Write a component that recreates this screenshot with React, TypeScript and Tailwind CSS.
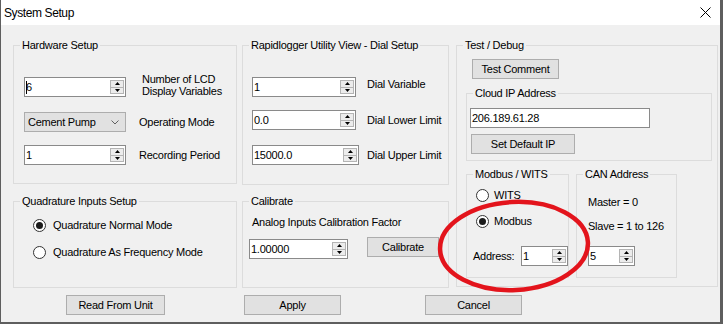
import type { ReactNode } from 'react';

/**
 * System Setup dialog - WinForms look
 */

function GroupBox({ title, className, children }: { title: string; className: string; children: ReactNode }) {
  return (
    <fieldset className={`min-w-0 border border-[#dcdcdc] ${className}`}>
      <legend className="ml-[6px] px-[2px] leading-[12px]">{title}</legend>
      {children}
    </fieldset>
  );
}

function Arrow({ up }: { up?: boolean }) {
  return (
    <svg width="5" height="3" viewBox="0 0 5 3">
      <path d={up ? 'M0 3 L2.5 0 L5 3 Z' : 'M0 0 L2.5 3 L5 0 Z'} fill="#000" />
    </svg>
  );
}

function Spin({ value, className, caret }: { value: string; className: string; caret?: boolean }) {
  return (
    <div className={`flex h-[20px] items-center border border-[#8a8a8a] bg-white ${className}`}>
      <span className="relative flex-1 pl-[1px] leading-[12px]">
        {caret && <span className="absolute left-[1px] top-0 h-[13px] w-px bg-black" />}
        {value}
      </span>
      <div className="mr-px flex h-[14px] w-[14px] flex-col">
        <div className="flex flex-1 items-center justify-center border border-[#b4b4b4] bg-[#ececec]">
          <Arrow up />
        </div>
        <div className="flex flex-1 items-center justify-center border border-t-0 border-[#b4b4b4] bg-[#ececec]">
          <Arrow />
        </div>
      </div>
    </div>
  );
}

function Btn({ children, className }: { children: ReactNode; className: string }) {
  return (
    <div className={`flex h-[20px] items-center justify-center border border-[#adadad] bg-[#e1e1e1] ${className}`}>
      {children}
    </div>
  );
}

function Radio({ label, checked, className, gap }: { label: string; checked?: boolean; className: string; gap: string }) {
  return (
    <div className={`flex h-[14px] items-center ${className}`}>
      <span className="flex h-[13px] w-[13px] items-center justify-center rounded-full border border-[#333] bg-white">
        {checked && <span className="h-[7px] w-[7px] rounded-full bg-[#1b1b1b]" />}
      </span>
      <span className={gap}>{label}</span>
    </div>
  );
}

export default function App() {
  return (
    <div className="relative flex h-[324px] w-[723px] flex-col border-b-2 border-l border-r-[3px] border-[#5e5e5e] font-['Liberation_Sans',Arial,sans-serif] text-[11px] tracking-[-0.25px] text-black">
      {/* Title bar */}
      <div className="flex h-[25px] shrink-0 items-center justify-between bg-white pl-[3px] pr-[9px]">
        <span className="text-[12px] tracking-[-0.4px]">System Setup</span>
        <svg width="11" height="11" viewBox="0 0 11 11">
          <path d="M0.5 0.5 L10.5 10.5 M10.5 0.5 L0.5 10.5" stroke="#000" strokeWidth="1" />
        </svg>
      </div>

      {/* Body */}
      <div className="flex-1 bg-[#f0f0f0] pl-[12px] pt-[14px]">
        <div className="flex items-start">
          {/* Left column */}
          <div className="flex w-[224px] flex-col">
            <GroupBox title="Hardware Setup" className="h-[145px]">
              <div className="pl-[10px]">
                <div className="mt-[26px] flex items-start">
                  <Spin value="6" caret className="w-[102px]" />
                  <div className="ml-[16px] -mt-[4px] leading-[12px]">
                    Number of LCD
                    <br />
                    Display Variables
                  </div>
                </div>
                <div className="mt-[15px] flex items-center">
                  <div className="flex h-[20px] w-[102px] items-center justify-between border border-[#adadad] bg-[#e1e1e1] pl-[3px] pr-[6px]">
                    <span>Cement Pump</span>
                    <svg width="8" height="5" viewBox="0 0 8 5">
                      <path d="M0.5 0.5 L4 4 L7.5 0.5" fill="none" stroke="#606060" strokeWidth="1" />
                    </svg>
                  </div>
                  <span className="ml-[13px]">Operating Mode</span>
                </div>
                <div className="mt-[13px] flex items-center">
                  <Spin value="1" className="w-[102px]" />
                  <span className="ml-[13px]">Recording Period</span>
                </div>
              </div>
            </GroupBox>

            <GroupBox title="Quadrature Inputs Setup" className="mt-[11px] h-[93px]">
              <div className="pl-[19px]">
                <Radio label="Quadrature Normal Mode" checked className="mt-[11px]" gap="ml-[7px]" />
                <Radio label="Quadrature As Frequency Mode" className="mt-[13px]" gap="ml-[7px]" />
              </div>
            </GroupBox>
          </div>

          {/* Middle column */}
          <div className="ml-[5px] flex w-[207px] flex-col">
            <GroupBox title="Rapidlogger Utility View - Dial Setup" className="h-[146px]">
              <div className="pl-[9px]">
                <div className="mt-[26px] flex items-start">
                  <Spin value="1" className="w-[104px]" />
                  <span className="ml-[11px] mt-px leading-[12px]">Dial Variable</span>
                </div>
                <div className="mt-[13px] flex items-center">
                  <Spin value="0.0" className="w-[104px]" />
                  <span className="ml-[11px]">Dial Lower Limit</span>
                </div>
                <div className="mt-[15px] flex items-center">
                  <Spin value="15000.0" className="w-[107px]" />
                  <span className="ml-[8px]">Dial Upper Limit</span>
                </div>
              </div>
            </GroupBox>

            <GroupBox title="Calibrate" className="mt-[10px] h-[93px]">
              <div className="pl-[9px] mt-[9px] leading-[12px]">Analog Inputs Calibration Factor</div>
              <div className="mt-[9px] flex items-start pl-[6px]">
                <Spin value="1.00000" className="mt-[2px] w-[99px]" />
                <Btn className="ml-[19px] w-[72px]">Calibrate</Btn>
              </div>
            </GroupBox>
          </div>

          {/* Right column */}
          <div className="ml-[7px] w-[262px]">
            <GroupBox title="Test / Debug" className="h-[248px]">
              <Btn className="ml-[15px] mt-[8px] w-[87px]">Test Comment</Btn>

              <GroupBox title="Cloud IP Address" className="ml-[9px] mt-[8px] h-[74px] w-[246px]">
                <div className="ml-[3px] mt-[9px] flex h-[20px] w-[180px] items-center border border-[#8a8a8a] bg-white pl-[1px]">
                  206.189.61.28
                </div>
                <Btn className="ml-[4px] mt-[6px] w-[104px]">Set Default IP</Btn>
              </GroupBox>

              <div className="mt-[7px] flex">
                <GroupBox title="Modbus / WITS" className="ml-[9px] h-[110px] w-[103px]">
                  <div className="pl-[9px]">
                    <Radio label="WITS" className="mt-[8px]" gap="ml-[5px]" />
                    <Radio label="Modbus" checked className="mt-[12px]" gap="ml-[5px]" />
                  </div>
                  <div className="mt-[18px] flex items-center">
                    <span className="w-[54px] pl-[6px]">Address:</span>
                    <Spin value="1" className="w-[47px]" />
                  </div>
                </GroupBox>

                <GroupBox title="CAN Address" className="ml-[7px] h-[110px] w-[101px]">
                  <div className="pl-[11px]">
                    <div className="mt-[16px] leading-[12px]">Master = 0</div>
                    <div className="mt-[12px] leading-[12px]">Slave = 1 to 126</div>
                    <Spin value="5" className="mt-[14px] w-[47px]" />
                  </div>
                </GroupBox>
              </div>
            </GroupBox>
          </div>
        </div>

        {/* Bottom buttons */}
        <div className="mt-[7px] flex">
          <Btn className="ml-[53px] w-[99px]">Read From Unit</Btn>
          <Btn className="ml-[79px] w-[97px]">Apply</Btn>
          <Btn className="ml-[84px] w-[97px]">Cancel</Btn>
        </div>
      </div>

      {/* Red marker drawn over the dialog */}
      <svg className="pointer-events-none absolute left-0 top-0" width="723" height="324" viewBox="0 0 723 324">
        <ellipse cx="513" cy="246" rx="74" ry="44" fill="none" stroke="#e3141c" strokeWidth="4.5" transform="rotate(-3 513 246)" />
      </svg>
    </div>
  );
}
